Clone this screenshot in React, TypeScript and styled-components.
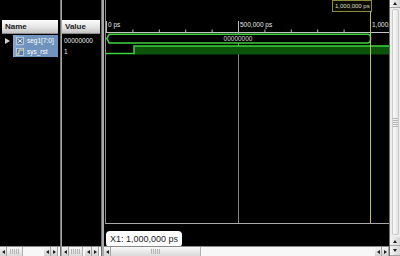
import React from "react";
import styled, { createGlobalStyle } from "styled-components";

const GlobalStyle = createGlobalStyle`
  html, body {
    margin: 0;
    padding: 0;
    background: #000;
  }
  body {
    font-family: "Liberation Sans", Arial, sans-serif;
  }
`;

const Window = styled.div`
  display: flex;
  width: 400px;
  height: 256px;
  background: #000;
  overflow: hidden;
`;

const Column = styled.div<{ $w: number }>`
  width: ${(p) => p.$w}px;
  flex: none;
  display: flex;
  flex-direction: column;
`;

const ColumnBody = styled.div<{ $inset: string }>`
  flex: 1;
  min-height: 0;
  padding: 20px ${(p) => p.$inset} 0 ${(p) => (p.$inset === "2px" ? "2px" : "0")};
  display: flex;
  flex-direction: column;
`;

const Header = styled.div`
  height: 14px;
  box-sizing: border-box;
  display: flex;
  align-items: center;
  padding-left: 3px;
  background: linear-gradient(#fdfdfd, #e4e4e4 55%, #c4c4c4);
  border-bottom: 1px solid #8c8c8c;
  font-size: 8px;
  font-weight: bold;
  color: #1c1c1c;
`;

const Rows = styled.div`
  padding-top: 1px;
  display: flex;
  flex-direction: column;
`;

const Row = styled.div`
  height: 11px;
  display: flex;
  align-items: center;
`;

const Expander = styled.div`
  width: 11px;
  flex: none;
  display: flex;
  justify-content: center;
`;

const ExpandArrow = styled.span`
  width: 0;
  height: 0;
  border-top: 3px solid transparent;
  border-bottom: 3px solid transparent;
  border-left: 5px solid #cfcfcf;
`;

const SignalCell = styled.div`
  flex: 1;
  height: 100%;
  display: flex;
  align-items: center;
  gap: 3px;
  padding-left: 3px;
  background: linear-gradient(90deg, #86a6cc, #7093bd 30%);
  color: #fff;
  font-size: 6.5px;
  white-space: nowrap;
  overflow: hidden;
`;

const ValueCell = styled.div`
  padding-left: 2px;
  color: #e8e8e8;
  font-size: 6.5px;
`;

const Splitter = styled.div<{ $w: number }>`
  width: ${(p) => p.$w}px;
  flex: none;
  background: #a9a9a9;
  border-left: 1px solid #6f6f6f;
  box-sizing: border-box;
`;

const HScroll = styled.div`
  height: 10px;
  flex: none;
  display: flex;
  background: #f4f4f4;
  border-top: 1px solid #8a8a8a;
  box-sizing: border-box;
`;

const Button = styled.div<{ $w: number }>`
  width: ${(p) => p.$w}px;
  flex: none;
  display: flex;
  align-items: center;
  justify-content: center;
  background: linear-gradient(#f6f6f6, #d2d2d2);
  border-right: 1px solid #a4a4a4;
  box-sizing: border-box;
`;

const Tri = styled.span<{ $dir: "l" | "r" | "u" | "d" }>`
  width: 0;
  height: 0;
  ${(p) =>
    p.$dir === "l"
      ? "border-top:2px solid transparent;border-bottom:2px solid transparent;border-right:3px solid #1f1f1f;"
      : p.$dir === "r"
      ? "border-top:2px solid transparent;border-bottom:2px solid transparent;border-left:3px solid #1f1f1f;"
      : p.$dir === "u"
      ? "border-left:2px solid transparent;border-right:2px solid transparent;border-bottom:3px solid #1f1f1f;"
      : "border-left:2px solid transparent;border-right:2px solid transparent;border-top:3px solid #1f1f1f;"}
`;

const Thumb = styled.div<{ $w: number }>`
  width: ${(p) => p.$w}px;
  flex: none;
  display: flex;
  align-items: center;
  justify-content: center;
  background: linear-gradient(#fafafa, #d9d9d9);
  border-right: 1px solid #b0b0b0;
  box-sizing: border-box;
`;

const Grip = styled.span<{ $vertical?: boolean }>`
  width: ${(p) => (p.$vertical ? "5px" : "9px")};
  height: ${(p) => (p.$vertical ? "9px" : "5px")};
  background: repeating-linear-gradient(
    ${(p) => (p.$vertical ? "180deg" : "90deg")},
    #b4b4b4 0 1px,
    transparent 1px 2px
  );
`;

const Track = styled.div`
  flex: 1;
  background: #f7f7f7;
`;

const WaveBody = styled.div`
  flex: 1;
  min-height: 0;
  display: flex;
  flex-direction: column;
`;

const Plot = styled.div`
  height: 224px;
  flex: none;
  margin-left: 1px;
  border-left: 1px solid #8d8d8d;
  border-bottom: 1px solid #a8a8a8;
  box-sizing: border-box;
  overflow: hidden;
  svg {
    display: block;
  }
`;

const CursorBar = styled.div`
  flex: 1;
  padding: 4px 0 0 2px;
`;

const CursorLabel = styled.div`
  display: inline-flex;
  align-items: center;
  height: 16px;
  padding: 0 4px;
  box-sizing: border-box;
  background: #fff;
  border-radius: 4px;
  color: #222;
  font-size: 9px;
`;

const VScroll = styled.div`
  width: 11px;
  flex: none;
  display: flex;
  flex-direction: column;
  background: #ececec;
  border-left: 1px solid #6e6e6e;
  box-sizing: border-box;
`;

const VButton = styled.div<{ $h: number }>`
  height: ${(p) => p.$h}px;
  flex: none;
  display: flex;
  align-items: center;
  justify-content: center;
  background: linear-gradient(90deg, #f6f6f6, #d6d6d6);
  border-bottom: 1px solid #a4a4a4;
  box-sizing: border-box;
`;

const VThumb = styled.div`
  flex: 1;
  margin: 1px 1px 2px 2px;
  display: flex;
  align-items: center;
  justify-content: center;
  background: linear-gradient(90deg, #fbfbfb, #e4e4e4);
  border: 1px solid #cacaca;
  border-radius: 2px;
`;

const SignalIcon = ({ bus }: { bus?: boolean }) => (
  <svg width="8" height="8" viewBox="0 0 8 8">
    <rect x="0.5" y="0.5" width="7" height="7" fill="#5a7aa3" stroke="#c9d6e6" strokeWidth="0.8" />
    <path
      d={bus ? "M1.5 6 L6.5 2 M1.5 2 L6.5 6" : "M1 6 L3 6 L3 2 L7 2"}
      stroke={bus ? "#e8eef6" : "#f2e6a0"}
      strokeWidth="1"
      fill="none"
    />
  </svg>
);

const Scrollbar = ({ thumb, gap }: { thumb: number; gap?: boolean }) => (
  <HScroll>
    <Button $w={7}>
      <Tri $dir="l" />
    </Button>
    <Thumb $w={thumb}>
      <Grip />
    </Thumb>
    <Track />
    <Button $w={7}>
      <Tri $dir="l" />
    </Button>
    <Button $w={7}>
      <Tri $dir="r" />
    </Button>
    {gap && <Track style={{ flex: "none", width: 2 }} />}
  </HScroll>
);

const PX_PER_DIV = 26.4;
const ticks = Array.from({ length: 11 }, (_, i) => i * PX_PER_DIV);

const Waves = () => (
  <svg width="283" height="223" viewBox="0 0 283 223" fontFamily="Liberation Sans, Arial, sans-serif">
    {/* cursor readout */}
    <rect x="226.5" y="0.5" width="39" height="11" fill="#0c0c02" stroke="#8c8c3c" />
    <text x="229" y="8.3" fontSize="6" fill="#dcdcc4">1,000,000 ps</text>

    {/* ruler */}
    <line x1="0" y1="32.5" x2="283" y2="32.5" stroke="#c4c4c4" />
    {ticks.map((t, i) => (
      <line
        key={i}
        x1={t + 0.5}
        y1={i % 5 === 0 ? 21 : 29.5}
        x2={t + 0.5}
        y2="32.5"
        stroke="#bdbdbd"
      />
    ))}
    <text x="2" y="26.5" fontSize="6.5" fill="#e6e6e6">0 ps</text>
    <text x="134" y="26.5" fontSize="6.5" fill="#e6e6e6">500,000 ps</text>
    <text x="266" y="26.5" fontSize="6.5" fill="#e6e6e6">1,000,000 ps</text>

    <line x1="132.5" y1="32.5" x2="132.5" y2="223" stroke="#858585" />

    {/* seg1[7:0] bus */}
    <path
      d="M0.8 38.6 L3.2 34.2 L262 34.2 Q264.6 34.4 264.6 38.6 Q264.6 42.8 262 43 L3.2 43 Z"
      fill="#000"
      stroke="#3fd23f"
      strokeWidth="1.6"
    />
    <text x="132" y="41" fontSize="6.5" fill="#d6d6d6" textAnchor="middle">00000000</text>

    {/* sys_rst */}
    <rect x="28" y="46" width="255" height="8.5" fill="#0b520b" />
    <polyline points="0,53.6 28,53.6 28,46 283,46" fill="none" stroke="#3fd23f" strokeWidth="1.5" />

    {/* cursor line */}
    <line x1="264.5" y1="11.5" x2="264.5" y2="223" stroke="#bdbd6a" />
  </svg>
);

const App = () => {
  return (
    <>
      <GlobalStyle />
      <Window>
        <Column $w={60}>
          <ColumnBody $inset="2px">
            <Header>Name</Header>
            <Rows>
              <Row>
                <Expander>
                  <ExpandArrow />
                </Expander>
                <SignalCell>
                  <SignalIcon bus />
                  seg1[7:0]
                </SignalCell>
              </Row>
              <Row>
                <Expander />
                <SignalCell>
                  <SignalIcon />
                  sys_rst
                </SignalCell>
              </Row>
            </Rows>
          </ColumnBody>
          <Scrollbar thumb={16} gap />
        </Column>
        <Splitter $w={2} />
        <Column $w={39}>
          <ColumnBody $inset="1px">
            <Header>Value</Header>
            <Rows>
              <Row>
                <ValueCell>00000000</ValueCell>
              </Row>
              <Row>
                <ValueCell>1</ValueCell>
              </Row>
            </Rows>
          </ColumnBody>
          <Scrollbar thumb={14} gap />
        </Column>
        <Splitter $w={3} />
        <Column $w={285}>
          <WaveBody>
            <Plot>
              <Waves />
            </Plot>
            <CursorBar>
              <CursorLabel>X1: 1,000,000 ps</CursorLabel>
            </CursorBar>
          </WaveBody>
          <Scrollbar thumb={90} />
        </Column>
        <VScroll>
          <VButton $h={8}>
            <Tri $dir="u" />
          </VButton>
          <VThumb>
            <Grip $vertical />
          </VThumb>
          <VButton $h={9}>
            <Tri $dir="u" />
          </VButton>
          <VButton $h={10}>
            <Tri $dir="d" />
          </VButton>
        </VScroll>
      </Window>
    </>
  );
};

export default App;
